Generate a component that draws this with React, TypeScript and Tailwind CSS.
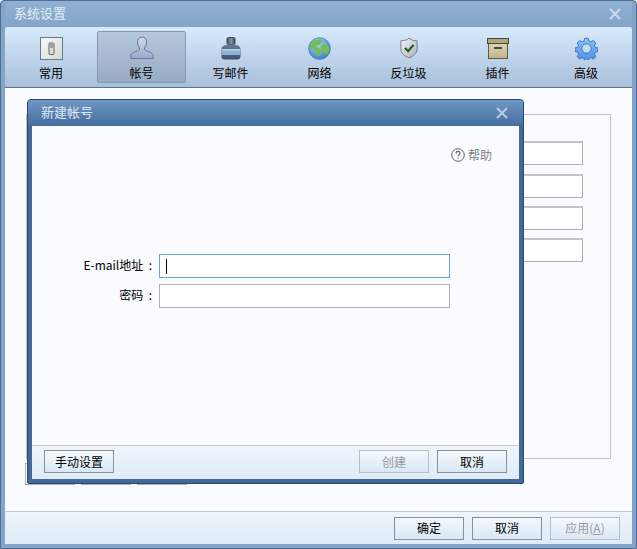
import React from "react";

const tabs = [
  { label: "常用", w: "w-[92px]", icon: <SwitchIcon /> },
  { label: "帐号", w: "w-[89px]", icon: <PersonIcon />, active: true },
  { label: "写邮件", w: "w-[89px]", icon: <InkIcon /> },
  { label: "网络", w: "w-[89px]", icon: <GlobeIcon /> },
  { label: "反垃圾", w: "w-[89px]", icon: <ShieldIcon /> },
  { label: "插件", w: "w-[89px]", icon: <BoxIcon /> },
  { label: "高级", w: "w-[88px]", icon: <GearIcon /> },
];

function SwitchIcon() {
  return (
    <svg width="23" height="23" viewBox="0 0 23 23">
      <defs>
        <linearGradient id="sw" x1="0" y1="0" x2="1" y2="1">
          <stop offset="0" stopColor="#fafafa" />
          <stop offset="1" stopColor="#d6d8d0" />
        </linearGradient>
      </defs>
      <rect x="0.5" y="0.5" width="22" height="22" fill="url(#sw)" stroke="#5f7b95" />
      <rect x="9" y="6" width="5" height="11.500" rx="0.800" fill="#d9dcd8" stroke="#5a6468" />
      <rect x="9.500" y="6.500" width="4" height="4.500" fill="#9aa2a6" />
    </svg>
  );
}
function PersonIcon() {
  return (
    <svg width="24" height="24" viewBox="0 0 24 24">
      <defs>
        <linearGradient id="pe" x1="0" y1="0" x2="0" y2="1">
          <stop offset="0" stopColor="#cfd8ec" />
          <stop offset="1" stopColor="#9babcc" />
        </linearGradient>
      </defs>
      <path d="M12 1c2.800 0 4.500 2.300 4.500 5.200 0 2.500-1 4.500-2 5.800-.2 1.600.5 2.400 2.100 2.900 3 1 5.500 2 6.400 3.800v3.800H1v-3.800c.9-1.800 3.400-2.800 6.400-3.800 1.600-.5 2.300-1.300 2.100-2.900-1-1.300-2-3.300-2-5.800C7.500 3.300 9.200 1 12 1z" fill="url(#pe)" stroke="#64779c" />
    </svg>
  );
}
function InkIcon() {
  return (
    <svg width="20" height="23" viewBox="0 0 20 23">
      <defs>
        <linearGradient id="ink" x1="0" y1="0" x2="0" y2="1">
          <stop offset="0" stopColor="#6a7b93" />
          <stop offset="1" stopColor="#3d5270" />
        </linearGradient>
        <linearGradient id="cap" x1="0" y1="0" x2="1" y2="0">
          <stop offset="0" stopColor="#3e4a5a" />
          <stop offset="0.500" stopColor="#8a95a5" />
          <stop offset="1" stopColor="#3e4a5a" />
        </linearGradient>
      </defs>
      <rect x="6" y="0.500" width="8" height="7" rx="1.500" fill="url(#cap)" stroke="#3a4656" />
      <path d="M3 8.500C5 7.300 15 7.300 17 8.500c1.700.8 2.500 2 2.500 3.500v8c0 1.500-1.500 2.500-3 2.500h-13c-1.500 0-3-1-3-2.500v-8c0-1.500.8-2.700 2.500-3.500z" fill="url(#ink)" />
      <rect x="1" y="12" width="18" height="6" rx="1" fill="#8db4d2" />
      <rect x="1" y="12" width="18" height="1.500" fill="#b3d0e6" />
    </svg>
  );
}
function GlobeIcon() {
  return (
    <svg width="23" height="23" viewBox="0 0 24 24">
      <defs>
        <radialGradient id="gl" cx="0.4" cy="0.3" r="0.8">
          <stop offset="0" stopColor="#a8d6f8" />
          <stop offset="1" stopColor="#2f78c2" />
        </radialGradient>
      </defs>
      <circle cx="12" cy="12" r="11.300" fill="url(#gl)" stroke="#4a7ca8" strokeWidth="0.800" />
      <path d="M4 6c2-3 7-4 10-3 1 1 0 3-1 4-1 2-4 1-4 3 0 1 2 1 3 2 3 1 2 4 1 6-1 2-3 3-4 1-1-2-1-3-2-5-1-2-4-3-5-4 0-1 1-3 2-4z" fill="#74bd52" />
      <path d="M15 8c2-1 6 0 7 3 1 2 0 5-2 7-1 1-2 0-2-1-1-2-3-2-4-4-1-1-1-4 1-5z" fill="#74bd52" />
    </svg>
  );
}
function ShieldIcon() {
  return (
    <svg width="18" height="22" viewBox="0 0 20 24">
      <defs>
        <linearGradient id="sh" x1="0" y1="0" x2="1" y2="1">
          <stop offset="0" stopColor="#f8fafa" />
          <stop offset="1" stopColor="#a6aeb6" />
        </linearGradient>
      </defs>
      <path d="M10 1c2 2 5 3 9 3v9c0 5-4 8-9 10C5 21 1 18 1 13V4c4 0 7-1 9-3z" fill="url(#sh)" stroke="#6f7882" />
      <path d="M5.500 12l3.500 3.500 6-7" fill="none" stroke="#1c5f1c" strokeWidth="2.400" />
    </svg>
  );
}
function BoxIcon() {
  return (
    <svg width="22" height="21" viewBox="0 0 22 21">
      <defs>
        <linearGradient id="bx" x1="0" y1="0" x2="0" y2="1">
          <stop offset="0" stopColor="#dcd3ae" />
          <stop offset="1" stopColor="#c0b48c" />
        </linearGradient>
      </defs>
      <rect x="1.500" y="5.500" width="19" height="15" fill="url(#bx)" stroke="#5f5944" />
      <rect x="0.500" y="0.500" width="21" height="5" fill="#b2a67c" stroke="#4f4a38" />
      <rect x="7" y="9" width="8" height="2" fill="#4a4a44" />
    </svg>
  );
}
function GearIcon() {
  return (
    <svg width="23" height="23" viewBox="0 0 24 24">
      <defs>
        <linearGradient id="ge" x1="0" y1="0" x2="0" y2="1">
          <stop offset="0" stopColor="#8cc3fa" />
          <stop offset="1" stopColor="#4a90e6" />
        </linearGradient>
      </defs>
      <path
        fillRule="evenodd"
        d="M10 .8h4l.7 3 2.200.9 2.600-1.600 2.800 2.800-1.600 2.600.9 2.200 3 .7v4l-3 .7-.9 2.200 1.600 2.600-2.800 2.800-2.600-1.600-2.200.9-.7 3h-4l-.7-3-2.200-.9-2.600 1.600-2.800-2.800 1.600-2.600-.9-2.200-3-.7v-4l3-.7.9-2.200-1.600-2.600 2.800-2.800 2.600 1.600 2.200-.9zM12 6.800a5.200 5.200 0 1 0 0 10.400 5.200 5.200 0 0 0 0-10.400z"
        transform="translate(0.600 0.600) scale(0.95)"
        fill="url(#ge)"
        stroke="#2f66aa"
        strokeWidth="0.900"
      />
    </svg>
  );
}

function CloseIcon({ color }: { color: string }) {
  return (
    <svg width="12" height="12" viewBox="0 0 12 12">
      <path d="M1 1l10 10M11 1L1 11" stroke={color} strokeWidth="2.200" fill="none" />
    </svg>
  );
}

function Btn({ children, disabled }: { children: React.ReactNode; disabled?: boolean }) {
  return (
    <div
      className={
        "w-[70px] h-[23px] flex items-center justify-center text-[12px] bg-gradient-to-b from-[#f4f8fc] to-[#d9e8f6] border " +
        (disabled ? "border-[#b9bfc6] text-[#9a9a9a]" : "border-[#8a9097] text-black")
      }
    >
      {children}
    </div>
  );
}

function BackInput({ extra = "" }: { extra?: string }) {
  return <div className={"h-[24px] bg-white border border-[#b0b0b0] border-t-2 border-t-[#c4c4c4] " + extra} />;
}

export default function App() {
  return (
    <div
      className="relative w-[637px] h-[549px] overflow-hidden rounded-t-[4px] border border-[#4f6f92] bg-[#84a5c9] flex flex-col px-1 pb-[4px]"
      style={{ fontFamily: '"Noto Sans CJK SC", "Liberation Sans", sans-serif' }}
    >
      <div className="h-[26px] shrink-0 flex items-center justify-between pl-[9px] pr-[11px] bg-gradient-to-b from-[#8fb0d3] to-[#85a5c8]">
        <span className="text-[13px] leading-[18px] -mt-[3px] text-[#e4edf6]">系统设置</span>
        <CloseIcon color="#c9d9e8" />
      </div>

      <div className="h-[61px] shrink-0 flex items-stretch rounded-t-[2px] bg-gradient-to-b from-[#d8ebfd] to-[#a8bfd8] border-b border-[#5f7488]">
        {tabs.map((t) => (
          <div key={t.label} className={"flex flex-col items-center pt-[4px] " + t.w}>
            <div
              className={
                "w-[89px] h-[52px] flex flex-col items-center pt-[4px] gap-[5px] rounded-[2px] border " +
                (t.active ? "bg-gradient-to-b from-[#b5c8dc] to-[#98abc4] border-[#8598b0]" : "border-transparent")
              }
            >
              <div className="h-[24px] flex items-center justify-center">{t.icon}</div>
              <span className="text-[12px] leading-[16px] text-black">{t.label}</span>
            </div>
          </div>
        ))}
      </div>

      <div className="flex-1 bg-[#fafbff] relative pt-[26px] pl-[21px] pr-[21px]">
        <div className="h-[345px] border border-[#c4c4c4] pt-[26px] pl-[100px] pr-[27px] flex flex-col gap-[8px]">
          <BackInput />
          <BackInput extra="mt-[1px]" />
          <BackInput />
          <BackInput />
        </div>
        <div className="flex gap-[6px] mt-[4px] -ml-[1px]">
          <div className="w-[50px] h-[22px] border border-[#b0b0b0] bg-white" />
          <div className="w-[50px] h-[22px] border border-[#b0b0b0] bg-white" />
          <div className="w-[50px] h-[22px] border border-[#b0b0b0] bg-white" />
        </div>
      </div>

      <div className="h-[33px] shrink-0 flex items-center justify-end gap-[8px] pr-[12px] border-t border-[#c4cad2] bg-gradient-to-b from-[#eef5fb] to-[#dfebf7]">
        <Btn>确定</Btn>
        <Btn>取消</Btn>
        <Btn disabled>应用(<span className="underline">A</span>)</Btn>
      </div>

      <div className="absolute left-[26px] top-[98px] w-[497px] h-[385px] rounded-t-[4px] rounded-b-[2px] border border-[#2b4a6e] bg-[#41699a] flex flex-col px-1 pb-[4px]">
        <div className="h-[26px] shrink-0 flex items-center justify-between -mx-1 pl-[13px] pr-[15px] rounded-t-[3px] bg-gradient-to-b from-[#6f98c4] to-[#436d9f]">
          <span className="text-[13px] leading-[18px] -mt-[2px] text-[#dfe9f4]">新建帐号</span>
          <CloseIcon color="#b9cde0" />
        </div>
        <div className="flex-1 bg-[#fafbff] flex flex-col">
          <div className="flex justify-end items-center gap-[3px] pt-[20px] pr-[27px] text-[12px] text-[#808080]">
            <svg width="14" height="14" viewBox="0 0 14 14">
              <circle cx="7" cy="7" r="6.300" fill="none" stroke="#606060" />
              <path d="M5 5.400c0-1.300 1-2 2-2s2 .7 2 1.900c0 1.600-2 1.500-2 3" fill="none" stroke="#606060" strokeWidth="1.100" />
              <rect x="6.500" y="9.500" width="1.100" height="1.200" fill="#606060" />
            </svg>
            <span>帮助</span>
          </div>
          <div className="mt-[90px] flex items-center">
            <span className="w-[120px] -mt-[2px] text-right text-[12px] text-black whitespace-pre">E-mail地址  :</span>
            <div className="w-[291px] h-[24px] bg-white border border-[#69a2e0] flex items-center pl-[6px] ml-[7px]">
              <div className="w-px h-[15px] bg-black" />
            </div>
          </div>
          <div className="mt-[6px] flex items-center">
            <span className="w-[120px] -mt-[2px] text-right text-[12px] text-black whitespace-pre">密码  :</span>
            <div className="w-[291px] h-[24px] bg-white border border-[#b0b0b0] ml-[7px]" />
          </div>
          <div className="mt-auto h-[34px] flex items-start pt-[4px] justify-between px-[12px] border-t border-[#c4cad2] bg-gradient-to-b from-[#eef5fb] to-[#dfebf7]">
            <Btn>手动设置</Btn>
            <div className="flex gap-[8px]">
              <Btn disabled>创建</Btn>
              <Btn>取消</Btn>
            </div>
          </div>
        </div>
      </div>
    </div>
  );
}
